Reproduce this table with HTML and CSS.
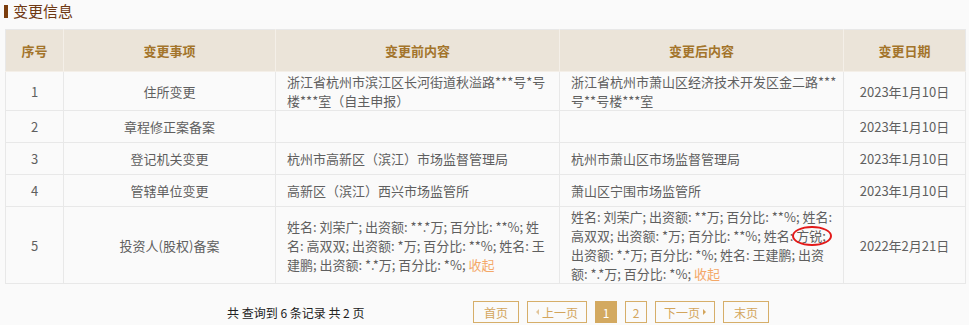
FILE: index.html
```html
<!DOCTYPE html>
<html lang="zh-CN">
<head>
<meta charset="utf-8">
<title>变更信息</title>
<link rel="stylesheet" href="styles.css">
</head>
<body>
<div class="page">
  <h2 class="section-title"><span class="bar"></span>变更信息</h2>
  <table class="change-table">
    <colgroup>
      <col class="c-no"><col class="c-item"><col class="c-before"><col class="c-after"><col class="c-date">
    </colgroup>
    <thead>
      <tr><th>序号</th><th>变更事项</th><th>变更前内容</th><th>变更后内容</th><th>变更日期</th></tr>
    </thead>
    <tbody>
      <tr>
        <td class="center">1</td>
        <td class="center">住所变更</td>
        <td class="lines">浙江省杭州市滨江区长河街道秋溢路***号*号<br>楼***室（自主申报）</td>
        <td class="lines">浙江省杭州市萧山区经济技术开发区金二路***<br>号**号楼***室</td>
        <td class="center">2023年1月10日</td>
      </tr>
      <tr>
        <td class="center">2</td>
        <td class="center">章程修正案备案</td>
        <td></td>
        <td></td>
        <td class="center">2023年1月10日</td>
      </tr>
      <tr>
        <td class="center">3</td>
        <td class="center">登记机关变更</td>
        <td>杭州市高新区（滨江）市场监督管理局</td>
        <td>杭州市萧山区市场监督管理局</td>
        <td class="center">2023年1月10日</td>
      </tr>
      <tr>
        <td class="center">4</td>
        <td class="center">管辖单位变更</td>
        <td>高新区（滨江）西兴市场监管所</td>
        <td>萧山区宁围市场监管所</td>
        <td class="center">2023年1月10日</td>
      </tr>
      <tr>
        <td class="center">5</td>
        <td class="center">投资人(股权)备案</td>
        <td class="lines">姓名: 刘荣广; 出资额: **.*万; 百分比: **%; 姓<br>名: 高双双; 出资额: *万; 百分比: **%; 姓名: 王<br>建鹏; 出资额: *.*万; 百分比: *%; <a class="toggle">收起</a></td>
        <td class="lines">姓名: 刘荣广; 出资额: **万; 百分比: **%; 姓名:<br>高双双; 出资额: *万; 百分比: **%; 姓名: <span class="mark">方锐;</span><br>出资额: *.*万; 百分比: *%; 姓名: 王建鹏; 出资<br>额: *.*万; 百分比: *%; <a class="toggle">收起</a></td>
        <td class="center">2022年2月21日</td>
      </tr>
    </tbody>
  </table>
  <div class="pager">
    <span class="pager-info">共 查询到 6 条记录 共 2 页</span>
    <div class="pager-links">
      <a class="pg">首页</a>
      <a class="pg arrow"><span class="tri tri-left"></span>上一页</a>
      <a class="pg num active">1</a>
      <a class="pg num">2</a>
      <a class="pg arrow">下一页<span class="tri tri-right"></span></a>
      <a class="pg">末页</a>
    </div>
  </div>
</div>
</body>
</html>
```
FILE: styles.css
```css
html, body {
  margin: 0;
  padding: 0;
  background: #fafafa;
}
body {
  font-family: "Noto Sans CJK SC", "Noto Sans", sans-serif;
  color: #666;
  font-size: 13px;
}
.page {
  padding: 0 4px 0 5px;
}
.section-title {
  display: flex;
  align-items: center;
  gap: 5px;
  margin: 0 0 0 -1px;
  height: 22px;
  font-size: 15px;
  font-weight: normal;
  color: #6e3812;
  line-height: 22px;
}
.section-title .bar {
  width: 4px;
  height: 13px;
  background: #7b3d0d;
}
.change-table {
  margin-top: 7px;
  width: 960px;
  border-collapse: collapse;
  table-layout: fixed;
  border: 1px solid #e8e8e8;
}
.c-no { width: 58px; }
.c-item { width: 212px; }
.c-before { width: 284px; }
.c-after { width: 284px; }
.c-date { width: 122px; }
.change-table th {
  background: #ebe4d9;
  color: #a3742b;
  font-weight: bold;
  font-size: 13px;
  height: 41px;
  padding: 0;
  border: 1px solid #f4efe8;
  border-top-color: #e8e8e8;
}
.change-table th:first-child { border-left-color: #e8e8e8; }
.change-table th:last-child { border-right-color: #e8e8e8; }
.change-table td {
  border: 1px solid #e8e8e8;
  padding: 0 11px;
  height: 31px;
  line-height: 19px;
  vertical-align: middle;
  color: #5f5f5f;
}
.change-table td.lines {
  white-space: nowrap;
}
.change-table td.center {
  text-align: center;
}
.toggle {
  color: #f4a868;
  cursor: pointer;
}
.mark {
  position: relative;
}
.mark::after {
  content: "";
  position: absolute;
  left: -4px;
  right: -6px;
  top: 0;
  bottom: -1px;
  border: 2px solid #e31a1a;
  border-radius: 50%;
}
.pager {
  display: flex;
  align-items: center;
  padding: 17px 0 0 222px;
}
.pager-info {
  color: #222;
  font-size: 12px;
  width: 246px;
}
.pager-links {
  display: flex;
  gap: 8px;
}
.pg {
  display: flex;
  align-items: center;
  justify-content: center;
  gap: 3px;
  box-sizing: border-box;
  height: 22px;
  padding: 0 10px;
  border: 1px solid #d6ae69;
  color: #d3a55c;
  font-size: 12px;
  cursor: pointer;
}
.pg.arrow {
  padding: 0 8px;
}
.pg.num {
  min-width: 22px;
  padding: 0 6px;
}
.pg.active {
  background: #d3a960;
  border-color: #d3a960;
  color: #fff;
}
.tri {
  width: 0;
  height: 0;
  border-top: 3px solid transparent;
  border-bottom: 3px solid transparent;
}
.tri-left {
  border-right: 3px solid #e2c59a;
}
.tri-right {
  border-left: 3px solid #d3a55c;
}
```
